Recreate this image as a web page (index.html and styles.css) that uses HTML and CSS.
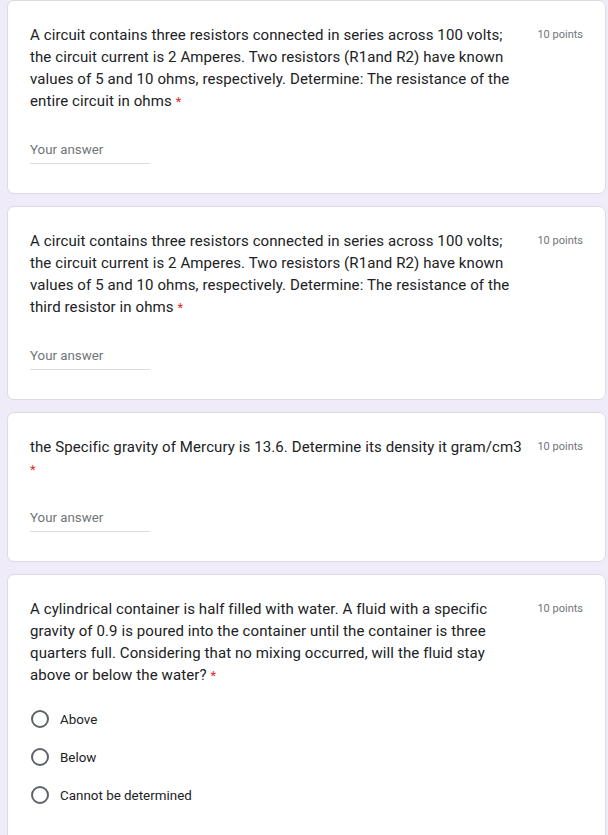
FILE: index.html
```html
<!DOCTYPE html>
<html>
<head>
<meta charset="utf-8">
<link rel="stylesheet" href="styles.css">
</head>
<body>
<div class="page">
  <div class="card">
    <div class="head">
      <div class="title">A circuit contains three resistors connected in series across 100 volts; the circuit current is 2 Amperes. Two resistors (R1and R2) have known values of 5 and 10 ohms, respectively. Determine: The resistance of the entire circuit in ohms <span class="req">*</span></div>
      <div class="points">10 points</div>
    </div>
    <div class="answer">Your answer</div>
  </div>
  <div class="card">
    <div class="head">
      <div class="title">A circuit contains three resistors connected in series across 100 volts; the circuit current is 2 Amperes. Two resistors (R1and R2) have known values of 5 and 10 ohms, respectively. Determine: The resistance of the third resistor in ohms <span class="req">*</span></div>
      <div class="points">10 points</div>
    </div>
    <div class="answer">Your answer</div>
  </div>
  <div class="card">
    <div class="head">
      <div class="title">the Specific gravity of Mercury is 13.6. Determine its density it gram/cm3 <span class="req">*</span></div>
      <div class="points">10 points</div>
    </div>
    <div class="answer">Your answer</div>
  </div>
  <div class="card">
    <div class="head">
      <div class="title">A cylindrical container is half filled with water. A fluid with a specific gravity of 0.9 is poured into the container until the container is three quarters full. Considering that no mixing occurred, will the fluid stay above or below the water? <span class="req">*</span></div>
      <div class="points">10 points</div>
    </div>
    <div class="options">
      <div class="option"><span class="radio"></span><span class="label">Above</span></div>
      <div class="option"><span class="radio"></span><span class="label">Below</span></div>
      <div class="option"><span class="radio"></span><span class="label">Cannot be determined</span></div>
    </div>
  </div>
</div>
</body>
</html>
```
FILE: styles.css
```css
html, body {
  margin: 0;
  padding: 0;
  background: #f0ebf8;
}
body {
  font-family: Roboto, "Liberation Sans", sans-serif;
  color: #202124;
}
.page {
  display: flex;
  flex-direction: column;
  gap: 12px;
  padding: 0 2px 0 7px;
}
.card {
  background: #fff;
  border: 1px solid #dadce0;
  border-radius: 7px;
  padding: 23px 22px 29px 22px;
}
.head {
  display: flex;
  align-items: flex-start;
}
.title {
  flex: 1;
  font-size: 15px;
  line-height: 22px;
  letter-spacing: 0.1px;
}
.req {
  color: #d93025;
  font-size: 13px;
  line-height: 1;
}
.points {
  flex: none;
  width: 56px;
  text-align: right;
  font-size: 11px;
  line-height: 22px;
  color: #70757a;
}
.answer {
  margin-top: 28px;
  width: 120px;
  font-size: 13.3px;
  line-height: 20px;
  color: #70757a;
  padding-bottom: 3px;
  border-bottom: 1px solid #dadce0;
}
.options {
  margin-top: 14px;
  display: flex;
  flex-direction: column;
}
.option {
  height: 38px;
  display: flex;
  align-items: center;
}
.radio {
  width: 14px;
  height: 14px;
  border: 2px solid #5f6368;
  border-radius: 50%;
  margin-left: 1px;
  flex: none;
}
.label {
  margin-left: 11px;
  font-size: 13.4px;
  color: #202124;
}
```
